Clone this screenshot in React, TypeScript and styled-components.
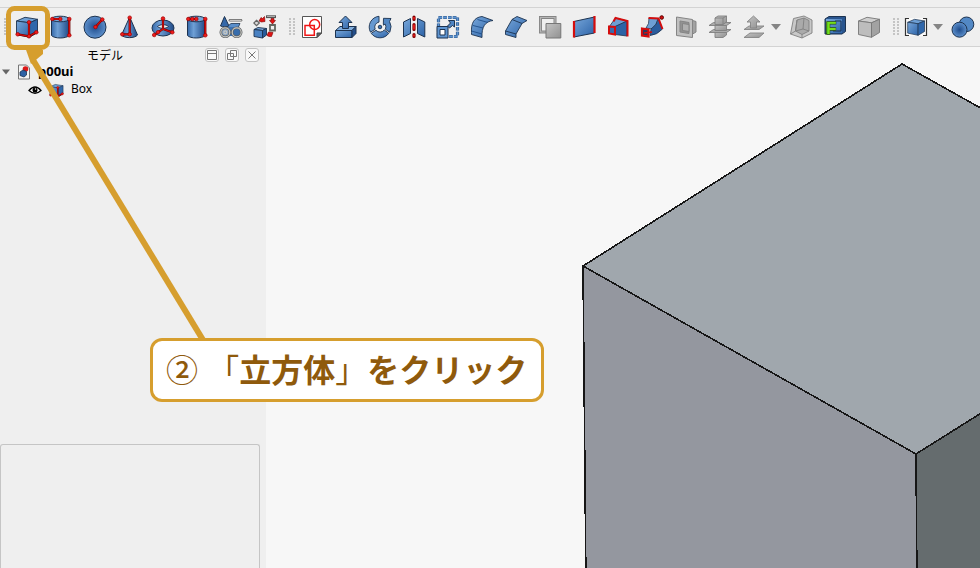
import React from "react";
import styled, { createGlobalStyle } from "styled-components";

const AMBER = "#d69e2e";

const GlobalStyle = createGlobalStyle`
  * { box-sizing: border-box; }
  body {
    margin: 0;
    background: #efefef;
    color: #000;
    font-family: "Noto Sans", "Noto Sans CJK JP", sans-serif;
    font-size: 13px;
    overflow: hidden;
  }
  button {
    padding: 0;
    border: 0;
    background: none;
    font: inherit;
    color: inherit;
  }
`;

const Window = styled.div`
  position: relative;
  display: flex;
  flex-direction: column;
  height: 100vh;
`;

const ToolBar = styled.div`
  display: flex;
  align-items: center;
  flex: none;
  height: 40px;
  margin-top: 7px;
  border-top: 1px solid #d3d3d3;
  border-bottom: 1px solid #d3d3d3;
  overflow: hidden;
`;

const Grip = styled.span<{ $lead?: boolean }>`
  flex: none;
  width: ${(p) => (p.$lead ? 10 : 13)}px;
  height: 18px;
  padding-left: ${(p) => (p.$lead ? 4 : 7)}px;

  &::before {
    content: "";
    display: block;
    width: 6px;
    height: 18px;
    background: radial-gradient(circle at 1px 1px, #c4c4c4 1px, transparent 1px) 0 0 / 4px 3px;
  }
`;

const ToolButton = styled.button`
  display: grid;
  place-items: center;
  flex: none;
  width: 34px;
  height: 34px;
`;

const MenuArrow = styled.button`
  display: grid;
  place-items: center start;
  flex: none;
  width: 13px;
  height: 34px;
`;

const Body = styled.div`
  display: flex;
  flex: 1;
  min-height: 0;
`;

const Sidebar = styled.aside`
  display: flex;
  flex-direction: column;
  flex: none;
  width: 266px;
  padding-right: 6px;
`;

const DockHeader = styled.header`
  display: flex;
  align-items: center;
  height: 16px;
  gap: 6px;
`;

const DockTitle = styled.h1`
  flex: 1;
  margin: 0;
  padding: 2px 0 0 11px;
  font-size: 12px;
  font-weight: 400;
  line-height: 18px;
  text-align: center;
`;

const DockButton = styled.button`
  display: grid;
  place-items: center;
  width: 14px;
  height: 14px;
  background: #f9f9f9;
  border: 1px solid #c2c2c2;
  border-radius: 3px;

  &:last-child { margin-right: 1px; }
`;

const Tree = styled.ul`
  flex: 1;
  margin: 0;
  padding: 0;
  list-style: none;
`;

const TreeRow = styled.li<{ $depth: number }>`
  display: flex;
  align-items: center;
  height: 18px;
  gap: 7px;
  padding-left: ${(p) => (p.$depth ? 28 : 2)}px;
  font-size: ${(p) => (p.$depth ? 12 : 13)}px;
  font-weight: ${(p) => (p.$depth ? 400 : 700)};
  line-height: 16px;
`;

const RowLabel = styled.span`
  padding-bottom: 2px;
`;

const PropertyPanel = styled.section`
  flex: none;
  height: 124px;
  border: 1px solid #c5c5c5;
  border-bottom: 0;
  border-radius: 3px 3px 0 0;
`;

const Viewport = styled.main`
  flex: 1;
  min-width: 0;
  background: #f7f7f7;
`;

const Scene = styled.svg`
  display: block;
  width: 100%;
  height: 100%;
`;

const Pointer = styled.svg`
  position: absolute;
  left: 0;
  top: 0;
  pointer-events: none;
`;

const Callout = styled.p`
  position: absolute;
  left: 150px;
  top: 338px;
  margin: 0;
  padding: 0 14px 4px 13px;
  border: 3px solid ${AMBER};
  border-radius: 12px;
  background: #fff;
  color: #8f5a0c;
  font-family: "Noto Sans CJK JP", sans-serif;
  font-size: 32px;
  font-weight: 700;
  line-height: 54px;
  white-space: nowrap;
`;

const Light = styled.span`
  font-weight: 400;
`;

const StepNumber = styled.span`
  margin-right: 2px;
  font-weight: 500;
`;

const Icon = ({ size = 24, children }: { size?: number; children: React.ReactNode }) => (
  <svg width={size} height={size} viewBox="0 0 24 24" fill="none" aria-hidden="true">
    {children}
  </svg>
);

const INK = "#1d3350";
const RED = "#d40d0d";

const Dots = ({ at }: { at: number[][] }) => (
  <>
    {at.map(([x, y]) => (
      <circle key={`${x}-${y}`} cx={x} cy={y} r="1.8" fill="#ef1c1c" stroke="#a00000" strokeWidth=".7" />
    ))}
  </>
);

const Rods = ({ d }: { d: string }) => (
  <>
    <path d={d} stroke="#6c0000" strokeWidth="2.2" />
    <path d={d} stroke={RED} strokeWidth="1.3" />
  </>
);

const Cube = ({ gray }: { gray?: boolean }) => {
  const [top, front, side, ink] = gray
    ? ["#cfcfcf", "#bdbdbd", "#a2a2a2", "#777"]
    : ["#6d9fd4", "url(#blue)", "#2f67ab", INK];
  return (
    <g stroke={ink} strokeWidth=".9" strokeLinejoin="round">
      <path d="M1.5 6 10 2.3 22.5 4.3 14.5 7.8Z" fill={top} />
      <path d="M1.5 6 14.5 7.8V22.3L1.5 19.5Z" fill={front} />
      <path d="M14.5 7.8 22.5 4.3V17.5L14.5 22.3Z" fill={side} />
    </g>
  );
};

const BoxDrawing = () => (
  <>
    <Cube />
    <Rods d="M14 7.3V21.3L2.7 19.3M14 21.3 21.3 17.3" />
    <Dots at={[[14, 7.3], [2.7, 19.3], [14, 21.3], [21.3, 17.3]]} />
  </>
);

const Barrel = () => (
  <g stroke={INK}>
    <path d="M2.5 4V20.5C5 23.8 17.5 23.8 20 20.5V4Z" fill="url(#round)" />
    <ellipse cx="11.2" cy="4" rx="8.8" ry="2.8" fill="#7aa8d8" />
  </g>
);

const drawings: Record<string, React.ReactNode> = {
  box: <BoxDrawing />,
  cylinder: (
    <>
      <Barrel />
      <Rods d="M3.3 4H11.3M20.3 4V20.3" />
      <Dots at={[[3.3, 4], [11.3, 4], [20.3, 4], [20.3, 20.3]]} />
    </>
  ),
  sphere: (
    <>
      <circle cx="12" cy="12.2" r="11" fill="url(#ball)" stroke={INK} />
      <Rods d="M12.5 12 19.3 4.5" />
      <Dots at={[[12.5, 12], [19.3, 4.5]]} />
    </>
  ),
  cone: (
    <>
      <path d="M12.7 2 20.5 20C18 23.5 7 23.5 4.5 20Z" fill="url(#round)" stroke={INK} />
      <Rods d="M12.7 3V19.3H5.3" />
      <Dots at={[[12.7, 2.7], [12.7, 19.3], [5.3, 19.3]]} />
    </>
  ),
  torus: (
    <>
      <ellipse cx="12" cy="13" rx="11" ry="8" fill="url(#round)" stroke={INK} />
      <path d="M6.5 11.5C9 9 15 9 17.5 11.5 15 14 9 14 6.5 11.5Z" fill="#efefef" stroke={INK} />
      <Rods d="M12 4V14L3.7 19.7M12 14 21.3 17.3" />
      <Dots at={[[12, 3.5], [3.2, 20], [21.3, 17.3], [7, 17.2]]} />
    </>
  ),
  pipe: (
    <>
      <Barrel />
      <Rods d="M3.3 4H11.3M20.3 4V20.3" />
      <Dots at={[[3.3, 4], [7.3, 4], [11.3, 4], [20.3, 4], [20.3, 20.3]]} />
    </>
  ),
  primitives: (
    <>
      <path d="M5.5 1.5 10 11C8 12 3.5 12 1.5 11Z" fill="#3568a8" stroke={INK} />
      <path d="M9 11 12 8.5H21L19 13H9Z" fill="#5a8fcb" stroke={INK} strokeWidth=".8" />
      <path d="M11 5.3H22" stroke="#666" strokeWidth="2.6" strokeLinecap="round" />
      <path d="M11 5.3H22" stroke="#c4c4c4" strokeWidth="1.2" strokeLinecap="round" />
      <path d="M5 12H19V21H5Z" fill="#3c73b5" />
      <g strokeWidth="2.6" stroke="#5b5f62">
        <circle cx="6.3" cy="17.3" r="4.5" fill="#8ba6c4" />
        <circle cx="17.7" cy="17.3" r="4.5" fill="#376dac" />
      </g>
      <g strokeWidth="1.2" stroke="#c7c7c2">
        <circle cx="6.3" cy="17.3" r="4.5" />
        <circle cx="6.3" cy="17.3" r="1.5" />
        <circle cx="17.7" cy="17.3" r="4.5" />
      </g>
    </>
  ),
  migrate: (
    <>
      <g stroke={INK} strokeWidth=".9">
        <path d="M1 14.5 5 12.5 13.5 13.5 9.5 15.5Z" fill="#76a5d7" />
        <path d="M1 14.5 9.5 15.5V23L1 21.5Z" fill="#4a82c3" />
        <path d="M9.5 15.5 13.5 13.5V20L9.5 23Z" fill="#285b99" />
      </g>
      <path d="M3.5 5.3 6.3 8 3.5 10.7.8 8Z" fill="#ddd" stroke="#666" strokeWidth="1.3" />
      <path d="M13 1.7H23" stroke="#555" strokeWidth="2.8" />
      <path d="M14 1.5H22" stroke="#aaa" />
      <path d="M17 10H22V15.5H17Z" fill="#eee" stroke="#62665f" strokeWidth="1.8" />
      <g fill="#e01414" stroke="#7c0000" strokeWidth=".6">
        <path d="M6 6 8 2.5 9.5 3.5 11.5 1.5 12 6.5 8.5 7Z" />
        <path d="M18 3.5H21V5.5H22.5L19.5 9 16.5 5.5H18Z" />
        <path d="M20 17.5 18.5 21.5 16 21.5 14 20.5 15.5 17Z" />
      </g>
    </>
  ),
  sketch: (
    <>
      <path d="M2.5 1.5H21.5V18L17 22.5H2.5Z" fill="#fff" stroke="#555" />
      <path d="M21.5 18H17V22.5Z" fill="#666" stroke="#444" />
      <path d="M5 10.5H14.3V20.3H5Z" stroke="#f01616" strokeWidth="1.5" />
      <circle cx="14.7" cy="9.5" r="5" stroke="#f01616" strokeWidth="1.5" />
    </>
  ),
  pad: (
    <g stroke={INK} strokeLinejoin="round">
      <path d="M1.5 15.5 6 11.5H22L18 15.5Z" fill="#81aede" />
      <path d="M1.5 15.5H18V22.5H1.5Z" fill="url(#blue)" />
      <path d="M18 15.5 22 11.5V18.5L18 22.5Z" fill="#244f8b" />
      <path d="M11.5 1 18 7.5H14.5V13.5H8.5V7.5H5Z" fill="url(#blue)" />
    </g>
  ),
  revolve: (
    <g stroke={INK} strokeWidth=".9" strokeLinejoin="round">
      <path d="M11 1.3A10.8 10.8 0 0 0 2.5 17.2L7.2 14.2A5 5 0 0 1 11 7.1Z" fill="#6698d0" />
      <path d="M3.2 18.3A10.8 10.8 0 0 0 20.8 18.3L16.3 15A5.4 5.4 0 0 1 8 15.3Z" fill="url(#blue)" />
      <path d="M17.4 14.3 21.8 17.3Q24.500 11 21.5 6.5L23 3.5 15.5 3.3 15.3 10.2 17.2 9Q18.5 11.5 17.4 14.3Z" fill="#5287c3" />
      <circle cx="12" cy="12" r="3.4" fill="#f4f4f4" stroke="none" />
      <circle cx="12" cy="12" r="1.8" fill="#3b71b2" />
    </g>
  ),
  mirror: (
    <>
      <path d="M1.5 7 8.5 3.5V18.5L1.5 22ZM22.8 7 15.5 3.5V18.5L22.8 22Z" fill="url(#blue)" stroke={INK} />
      <path d="M12 2V4.5M12 9.5V14.5M12 19.5V21.5" stroke="#7c0000" strokeWidth="3.2" strokeLinecap="round" />
      <path d="M12 2V4.5M12 9.5V14.5M12 19.5V21.5" stroke="#e51818" strokeWidth="1.8" />
    </>
  ),
  transform: (
    <>
      <path d="M2.5 2.5H21.5V21.5H2.5Z" stroke="#2b5489" strokeWidth="3.2" strokeDasharray="3.6 1.15" />
      <path d="M2.5 2.5H21.5V21.5H2.5Z" stroke="#5e94d0" strokeWidth="1.8" strokeDasharray="3.6 1.15" />
      <path d="M1 11.5H12V23H1Z" fill="#5e94d0" stroke={INK} />
      <path d="M4 14.5H9V20H4Z" fill="#fff" stroke={INK} />
      <path d="M12.5 5.5H18.5V12L16.5 10.5 13.5 13 11.5 11 14.5 8Z" fill="#4e84c3" stroke={INK} />
    </>
  ),
  fillet: (
    <g stroke={INK} strokeWidth=".9" strokeLinejoin="round">
      <path d="M1.5 17.5C1 8 4 2.5 12 1.5L23 5.5C15 6.5 11.5 12 12 22.5L1.5 19.5Z" fill="url(#blue)" />
      <path d="M1.5 16 12 19M3 10.5 13 13M7.5 4.5 18 7.5" stroke="#1f4f8b" />
    </g>
  ),
  chamfer: (
    <g stroke={INK} strokeWidth=".9" strokeLinejoin="round">
      <path d="M1.5 16 8 4.5 13 1.5 23 5.5 18 8.5 12 19V22.5L1.5 19.5Z" fill="url(#blue)" />
      <path d="M1.5 16 12 19M8 4.5 18 8.5" />
    </g>
  ),
  boolean: (
    <>
      <path d="M2.5 2.5H17V17H2.5Z" stroke="#858585" strokeWidth="3" />
      <path d="M2.5 2.5H17V17H2.5Z" stroke="#b5b5b5" strokeWidth="1.2" />
      <path d="M8 8.5H22.8V23H8Z" fill="url(#gray)" stroke="#777" />
    </>
  ),
  surface: (
    <>
      <path d="M1.8 6.5 22.5 2V18L1.8 22Z" fill="url(#blue)" stroke={INK} />
      <path d="M2 6V22.5M22.5 1V18" stroke={RED} strokeWidth="2.2" />
    </>
  ),
  loft: (
    <>
      <path d="M3 12 9.5 3 21.5 6 9 12Z" fill="#6d9fd4" stroke={INK} strokeWidth=".8" />
      <path d="M9 11.5 21 6V21L9 19.5Z" fill="#2d63a5" stroke={INK} strokeWidth=".8" />
      <path d="M7.5 6.5 9.5 3 21.5 6V21.5" stroke={RED} strokeWidth="2" />
      <path d="M3 11.5 9 12V19.5L3 18.5Z" fill="#3d6bab" stroke={RED} strokeWidth="2" />
    </>
  ),
  sweep: (
    <>
      <path d="M6 13Q9.5 9 9 3L18 3.5Q17 10 12 14Z" fill="#6d9fd4" stroke={INK} strokeWidth=".8" />
      <path d="M11 14Q17 10 18.5 4L22.5 14Q17 20 10 20.5Z" fill="#2a5c9d" stroke={INK} strokeWidth=".8" />
      <path d="M8.5 3 18.5 3.5 22.5 14" stroke={RED} strokeWidth="2" />
      <path d="M2 13.5 8.5 14.5V21.5L2 20.5Z" fill="#263a61" stroke={RED} strokeWidth="2.2" />
      <circle cx="21.7" cy="2.5" r="1.8" fill={RED} stroke="#5c0000" />
      <path d="M4 18 12 17" stroke={RED} strokeWidth="1.5" />
    </>
  ),
  thickness: (
    <g stroke="#858585">
      <path d="M17 5 22 6.5V17L17 20Z" fill="#a2a2a2" />
      <path d="M2.5 2 18.5 4.5V22.5L2.5 20.5Z" fill="#c0c0c0" />
      <path d="M6 6 15 7.5V18.5L6 17Z" fill="#929292" />
      <path d="M8.5 8.5 15 9.5V16.5L8.5 15.5Z" fill="#b0b0b0" />
    </g>
  ),
  section: (
    <g stroke="#808080" strokeWidth=".9" strokeLinejoin="round">
      <path d="M7 15.5H18.5V20L15 22.5H7Z" fill="url(#gray)" />
      <path d="M1 17.5 5.5 14.5H23L18.5 17.5Z" fill="#ababab" />
      <path d="M7 10H18.5V15.5H7Z" fill="url(#gray)" />
      <path d="M1 10.5 5.5 7.5H23L18.5 10.5Z" fill="#ababab" />
      <path d="M7 3 10 1H18.5V7L15 9.5H7Z" fill="url(#gray)" />
      <path d="M7 3H15V9.5M15 3 18.5 1" />
    </g>
  ),
  offset: (
    <g stroke="#858585" strokeWidth=".9" fill="url(#gray)" strokeLinejoin="round">
      <path d="M2 22.5 8 18H22L17 22.5Z" />
      <path d="M2 14.5 7 11H22L17 14.5Z" />
      <path d="M11.5 1 18 7H14.5V13H8.5V7H5Z" />
    </g>
  ),
  shell: (
    <g stroke="#808080" strokeWidth=".9" strokeLinejoin="round">
      <path d="M4.5 3.5 15 1 23 5V18L13 23 1.5 19Z" fill="#c8c8c8" />
      <path d="M8 5 15 3 20 5.5V16L13 19.5 6.5 16Z" fill="#aaa" />
      <path d="M15 3 14 14 20 16M14 14 6.5 16 1.5 19M13 19.5V23M8 5 6.5 16" />
    </g>
  ),
  font: (
    <>
      <path d="M2 4 6 1.5H22.5V16.5L19 19H2Z" fill="#29558f" stroke={INK} />
      <path d="M3 4H19V18H3Z" fill="url(#blue)" />
      <path d="M12 6H18V16H10" stroke={INK} />
      <text x="3" y="19" fontFamily="Liberation Sans, sans-serif" fontSize="17" fontWeight="700" fill="#75df1d" stroke="#2b5b0a" strokeWidth="1.5" paintOrder="stroke">F</text>
    </>
  ),
  solid: <Cube gray />,
  select: (
    <>
      <path d="M1 3H23V21H1Z" fill="#fafafa" />
      <path d="M5 3.5H1.5V20.5H5M19 3.5H22.5V20.5H19" stroke="#333" strokeWidth="1.2" />
      <g transform="translate(2.5 2.5) scale(.8)"><Cube /></g>
    </>
  ),
  union: (
    <g stroke={INK}>
      <circle cx="15.5" cy="9.3" r="7.3" fill="#5288c5" />
      <circle cx="8.5" cy="14.7" r="7.5" fill="url(#ball)" />
    </g>
  ),
};

type Tool = { icon: string; label: string; menu?: boolean };

const groups: Tool[][] = [
  [
    { icon: "box", label: "立方体" },
    { icon: "cylinder", label: "円柱" },
    { icon: "sphere", label: "球体" },
    { icon: "cone", label: "円錐" },
    { icon: "torus", label: "トーラス" },
    { icon: "pipe", label: "チューブ" },
    { icon: "primitives", label: "プリミティブ" },
    { icon: "migrate", label: "シェイプビルダー" },
  ],
  [
    { icon: "sketch", label: "スケッチ" },
    { icon: "pad", label: "押し出し" },
    { icon: "revolve", label: "回転" },
    { icon: "mirror", label: "鏡像" },
    { icon: "transform", label: "拡大縮小" },
    { icon: "fillet", label: "フィレット" },
    { icon: "chamfer", label: "面取り" },
    { icon: "boolean", label: "面を作成" },
    { icon: "surface", label: "ルールドサーフェス" },
    { icon: "loft", label: "ロフト" },
    { icon: "sweep", label: "スイープ" },
    { icon: "thickness", label: "断面" },
    { icon: "section", label: "クロスセクション" },
    { icon: "offset", label: "オフセット", menu: true },
    { icon: "shell", label: "厚み" },
    { icon: "font", label: "投影" },
    { icon: "solid", label: "ソリッド" },
  ],
  [
    { icon: "select", label: "コンパウンド", menu: true },
    { icon: "union", label: "ブーリアン演算" },
  ],
];

const DownTriangle = ({ width = 10, color = "#858585" }: { width?: number; color?: string }) => (
  <svg width={width} height="6" viewBox="0 0 10 6" aria-hidden="true">
    <path d="M0 0H10L5 6Z" fill={color} />
  </svg>
);

const dockButtons = [
  { label: "折りたたむ", d: "M1.5 1.5H10.5V10.5H1.5ZM1.5 4.5H10.5" },
  { label: "フロート", d: "M4.5 1.5H10.5V7.5H4.5ZM1.5 4.5H7.5V10.5H1.5Z" },
  { label: "閉じる", d: "M2.5 2.5 9.5 9.5M9.5 2.5 2.5 9.5" },
];

export default function App() {
  return (
    <>
      <GlobalStyle />
      <Window>
        <ToolBar role="toolbar">
          {groups.map((tools, index) => (
            <React.Fragment key={index}>
              <Grip $lead={index === 0} />
              {tools.map((tool) => (
                <React.Fragment key={tool.icon}>
                  <ToolButton aria-label={tool.label}>
                    <Icon>{drawings[tool.icon]}</Icon>
                  </ToolButton>
                  {tool.menu && (
                    <MenuArrow aria-label={`${tool.label}メニュー`}>
                      <DownTriangle />
                    </MenuArrow>
                  )}
                </React.Fragment>
              ))}
            </React.Fragment>
          ))}
        </ToolBar>

        <Body>
          <Sidebar>
            <DockHeader>
              <DockTitle>モデル</DockTitle>
              {dockButtons.map((b) => (
                <DockButton key={b.label} aria-label={b.label}>
                  <svg width="12" height="12" viewBox="0 0 12 12" fill="none" stroke="#777" aria-hidden="true">
                    <path d={b.d} />
                  </svg>
                </DockButton>
              ))}
            </DockHeader>
            <Tree>
              <TreeRow $depth={0}>
                <DownTriangle width={8} color="#666" />
                <svg width="14" height="16" viewBox="0 0 14 16" fill="none" aria-hidden="true">
                  <path d="M1.5 1H9.5L12.5 4V15H1.5Z" fill="#f6f6f6" stroke="#777" />
                  <circle cx="8.5" cy="5" r="2.8" fill="#dc1717" />
                  <path d="M3 8 6 6 9.5 7.5V11L7 13 3 11.5Z" fill="#2e62a5" stroke={INK} strokeWidth=".8" />
                </svg>
                <RowLabel>p00ui</RowLabel>
              </TreeRow>
              <TreeRow $depth={1}>
                <svg width="14" height="12" viewBox="0 0 14 12" fill="none" aria-hidden="true">
                  <path d="M1 6.5Q7-.5 13 6.5Q7 12 1 6.5Z" fill="#fff" stroke="#000" strokeWidth="1.3" />
                  <circle cx="7" cy="6" r="2.5" fill="#000" />
                  <circle cx="7.5" cy="5" r=".7" fill="#fff" />
                </svg>
                <Icon size={15}>
                  <BoxDrawing />
                </Icon>
                <RowLabel>Box</RowLabel>
              </TreeRow>
            </Tree>
            <PropertyPanel aria-label="プロパティ" />
          </Sidebar>

          <Viewport>
            <Scene viewBox="0 0 714 521" preserveAspectRatio="xMaxYMin slice" role="img" aria-label="Box">
              <defs>
                <linearGradient id="blue" x1="0" y1="0" x2="1" y2="1">
                  <stop stopColor="#78a7da" />
                  <stop offset="1" stopColor="#2c63a8" />
                </linearGradient>
                <linearGradient id="round">
                  <stop stopColor="#3568a8" />
                  <stop offset=".35" stopColor="#6fa0d6" />
                  <stop offset="1" stopColor="#204a87" />
                </linearGradient>
                <radialGradient id="ball">
                  <stop stopColor="#1f4c8c" />
                  <stop offset="1" stopColor="#5d90cc" />
                </radialGradient>
                <linearGradient id="gray" x1="0" y1="0" x2="1" y2="1">
                  <stop stopColor="#c4c4c4" />
                  <stop offset="1" stopColor="#919191" />
                </linearGradient>
              </defs>
              <g stroke="#161616" strokeWidth="1.6" strokeLinejoin="round" shapeRendering="crispEdges">
                <path d="M317 219 636 17 736 73V353L650 407Z" fill="#a0a7ad" />
                <path d="M317 219 650 407 651 541H320Z" fill="#94979f" />
                <path d="M650 407 736 353V541H651Z" fill="#656c6e" />
              </g>
            </Scene>
          </Viewport>
        </Body>

        <Pointer width="210" height="345" viewBox="0 0 210 345" fill="none" aria-hidden="true">
          <rect x="8.5" y="8.5" width="39" height="39" rx="6" stroke={AMBER} strokeWidth="5" />
          <path d="M33 60 203 340" stroke={AMBER} strokeWidth="6" />
          <path d="M25 47 43 50V54L31 64Z" fill={AMBER} />
        </Pointer>
        <Callout>
          <StepNumber>②</StepNumber> <Light>「</Light>立方体<Light>」</Light>をクリック
        </Callout>
      </Window>
    </>
  );
}
